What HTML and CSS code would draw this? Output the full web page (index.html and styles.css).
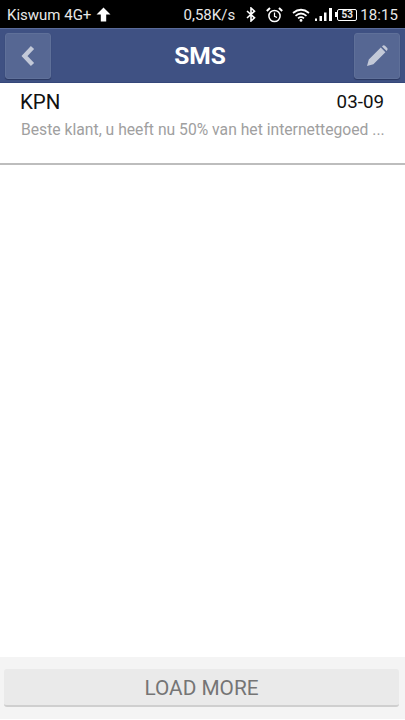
FILE: index.html
```html
<!DOCTYPE html>
<html lang="nl">
<head>
<meta charset="utf-8">
<title>SMS</title>
<link rel="stylesheet" href="styles.css">
</head>
<body>
<div class="page">
  <div class="status">
    <div class="status-left">
      <span>Kiswum 4G+</span>
      <svg class="up" width="15" height="15" viewBox="0 0 15 15"><path d="M7.5 0.5 14.5 7.6H10.2V14.5H4.8V7.6H.5Z" fill="#fff"/></svg>
    </div>
    <div class="status-right">
      <span class="speed">0,58K/s</span>
      <svg width="10" height="15" viewBox="0 0 10 15" class="bt"><path d="M1 4 8.5 10.8 5 14V1L8.5 4.2 1 11" fill="none" stroke="#fff" stroke-width="1.6"/></svg>
      <svg width="17" height="16" viewBox="0 0 17 16" class="alarm"><circle cx="8.5" cy="9" r="5.6" fill="none" stroke="#fff" stroke-width="1.5"/><path d="M8.5 5.5V9.3L11 10.5" fill="none" stroke="#fff" stroke-width="1.2"/><path d="M0.8 4 4 1M16.2 4 13 1" stroke="#fff" stroke-width="2"/></svg>
      <svg width="18" height="14" viewBox="0 0 18 14" class="wifi"><path d="M1 5Q9-1.5 17 5M3.5 7.8Q9 3.2 14.5 7.8M6 10.3Q9 8 12 10.3" fill="none" stroke="#fff" stroke-width="1.7"/><circle cx="9" cy="12.4" r="1.4" fill="#fff"/></svg>
      <svg width="17" height="13" viewBox="0 0 17 13" class="signal"><path d="M0 10.5H2V13H0ZM4.5 8H7V13H4.5ZM9 4.5H11.5V13H9ZM14 0H17V13H14Z" fill="#fff"/></svg>
      <div class="battery-nub"></div>
      <div class="battery"><span>53</span></div>
      <span class="clock">18:15</span>
    </div>
  </div>

  <header class="bar">
    <button class="tool" aria-label="Terug">
      <svg width="14" height="22" viewBox="0 0 14 22"><path d="M11.5 2.5 3.5 11 11.5 19.5" fill="none" stroke="#c3c9d8" stroke-width="4.4"/></svg>
    </button>
    <h1>SMS</h1>
    <button class="tool" aria-label="Bewerken">
      <svg width="22" height="22" viewBox="0 0 22 22"><path d="M1 21 2.8 14.6 14.8 2.6 19.4 7.2 7.4 19.2ZM16 1.4 17 .6Q18 0 19 .8L21.2 3Q22 4 21.3 5L20.6 6Z" fill="#c3c9d8"/></svg>
    </button>
  </header>

  <main class="list">
    <article class="row">
      <div class="row-top"><span class="name">KPN</span><span class="date">03-09</span></div>
      <p class="snippet">Beste klant, u heeft nu 50% van het internettegoed ...</p>
    </article>
  </main>

  <footer class="foot">
    <button class="more">LOAD MORE</button>
  </footer>
</div>
</body>
</html>
```

FILE: styles.css
```css
* { box-sizing: border-box; }
html, body { margin: 0; padding: 0; height: 100%; background: #fff; }
body { font-family: Roboto, "Noto Sans", sans-serif; }
.page { width: 405px; height: 720px; display: flex; flex-direction: column; overflow: hidden; }

.status { height: 28px; flex: none; background: #000; color: #e8e8e8; font-size: 15px; display: flex; justify-content: space-between; align-items: center; padding: 1px 7px 0 7px; }
.status-left { display: flex; align-items: center; gap: 5px; }
.status-right { display: flex; align-items: center; }
.speed { margin-right: 11px; margin-left: -1px; }
.bt { margin-right: 10px; }
.alarm { margin-right: 9px; }
.wifi { margin-right: 5px; }
.signal { margin-right: 3px; }
.battery-nub { width: 2px; height: 5px; background: #fff; }
.battery { width: 20px; height: 12px; border: 1.5px solid #fff; border-radius: 2px; display: flex; align-items: center; justify-content: center; margin-right: 3px; }
.battery span { font-size: 10px; font-weight: 700; line-height: 1; letter-spacing: -.2px; }
.clock { letter-spacing: .1px; }

.bar { height: 55px; flex: none; background: #3f5183; border-top: 1px solid #5a6b9a; border-bottom: 1px solid #35477a; display: flex; align-items: center; justify-content: space-between; padding: 0 5px; }
.bar h1 { margin: 0 5px 0 0; color: #fff; font-size: 24.5px; font-weight: 700; font-family: Roboto, sans-serif; }
.tool { width: 46px; height: 46px; padding: 0; background: #566793; border: 1px solid #5f7099; border-radius: 3px; box-shadow: 0 1px 1px #2a3760; display: flex; align-items: center; justify-content: center; }

.list { flex: 1; }
.row { height: 82px; border-bottom: 2px solid #bdbdbd; padding: 8px 21px 0 21px; }
.row-top { display: flex; justify-content: space-between; align-items: center; height: 22px; color: #111; }
.name { font-size: 20.5px; margin-left: -1px; }
.date { font-size: 18.8px; }
.snippet { margin: 7px 0 0; font-size: 15.7px; line-height: 20px; color: #a0a0a0; white-space: nowrap; }

.foot { flex: none; height: 62px; margin-bottom: 1px; background: #f4f4f4; padding: 12px 6px 0 4px; }
.more { display: block; width: 100%; height: 38px; padding: 1px 0 0; background: #eaeaea; border: 0; border-bottom: 2px solid #cfcfcf; border-radius: 3px; color: #757575; font-family: Roboto, sans-serif; font-size: 20.8px; }
```
